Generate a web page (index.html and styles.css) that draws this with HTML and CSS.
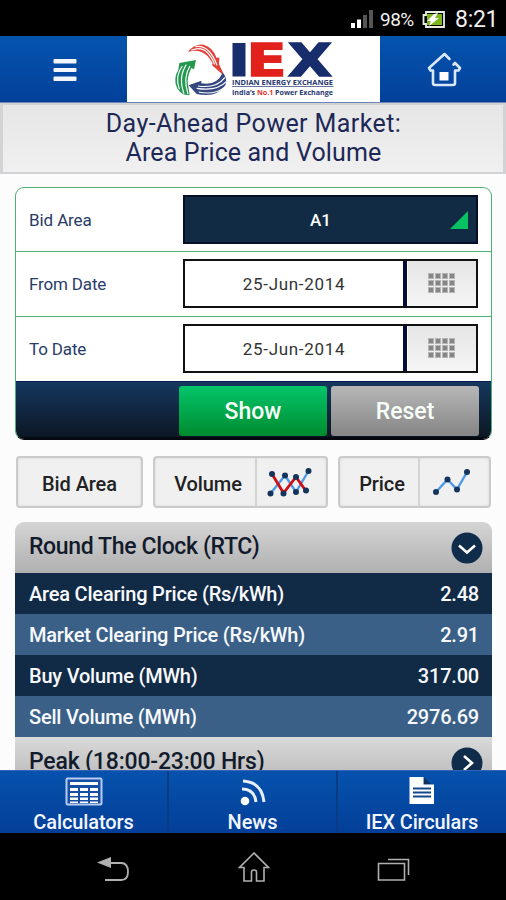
FILE: index.html
```html
<!DOCTYPE html>
<html lang="en">
<head>
<meta charset="utf-8">
<title>IEX - Area Price and Volume</title>
<link rel="stylesheet" href="styles.css">
</head>
<body>
<div class="phone">
  <div class="status">
    <svg class="signal" width="24" height="20" viewBox="0 0 24 20"><path fill="#fff" d="M1 14h4v5H1zM7 10.500h4V19H7z"/><path fill="#555" d="M13 6h4v13h-4zM19 1h4v18h-4z"/></svg>
    <span class="percent">98%</span>
    <svg class="battery" width="24" height="17" viewBox="0 0 24 17"><path fill="none" stroke="#e8eee0" stroke-width="1.800" d="M4 1h18v15H4v-3H1.500V4H4z"/><path fill="#7db51c" d="M5 3h15v11H5z"/><path fill="#fff" d="M16 2l-3 5h4L7 15l2-5H5l7-7z"/></svg>
    <span class="clock">8:21</span>
  </div>

  <header class="header">
    <div class="header-btn">
      <svg width="24" height="22" viewBox="0 0 24 22" fill="#f3f6ff"><rect x="0.500" width="23" height="4.500" rx="1"/><rect x="0.500" y="9" width="23" height="4" rx="1"/><rect x="0.500" y="17.500" width="23" height="4.500" rx="1"/></svg>
    </div>
    <div class="logo">
      <svg width="253" height="66" viewBox="127 36 253 66">
        <g transform="translate(170 36) scale(.3333)">
          <path fill="#e2413a" d="M54 47Q75 22 101 26Q128 33 140 66L148 64L147 84L164 121L126 88L128 82Q110 48 80 45Z"/>
          <path fill="none" stroke="#fff" stroke-width="3.500" d="M64 43Q110 22 134 86M76 32Q118 25 141 88M62 48Q100 38 122 78"/>
          <path fill="#23994f" d="M78 72L72 100L64 96Q50 125 54 145L59 177Q38 180 22 158Q8 130 25 101L28 81Z"/>
          <path fill="none" stroke="#fff" stroke-width="3.500" d="M60 90Q38 125 54 174M49 86Q24 123 42 173M37 90Q14 120 28 160"/>
          <path fill="#34477f" d="M56 148L94 134L94 142Q140 150 158 110Q174 125 166 148Q140 187 80 174Z"/>
          <path fill="none" stroke="#fff" stroke-width="3.500" d="M84 150Q140 158 165 124M80 157Q140 167 169 137M86 168Q130 178 163 155"/>
        </g>
        <g class="wordmark">
          <path fill="#172d6c" d="M232.500 43h13v33.500h-13z"/>
          <text x="246.500" y="76" textLength="40" lengthAdjust="spacingAndGlyphs" fill="#e2211c" stroke="#e2211c">E</text>
          <text x="288" y="76" textLength="44" lengthAdjust="spacingAndGlyphs" fill="#172d6c" stroke="#172d6c">X</text>
        </g>
        <text class="tag" x="232" y="84.500" textLength="101" lengthAdjust="spacingAndGlyphs">INDIAN ENERGY EXCHANGE</text>
        <path stroke="#68769e" d="M232 86.500h101.500"/>
        <text class="tag" x="232" y="94.500" textLength="101" lengthAdjust="spacingAndGlyphs">India’s <tspan fill="#e2312d">No.1</tspan> Power Exchange</text>
      </svg>
    </div>
    <div class="header-btn home">
      <svg width="36" height="36" viewBox="0 0 36 36" fill="none" stroke="#dbe7fb" stroke-width="2.600" stroke-linejoin="round" stroke-linecap="round"><path d="M23.500 8L18.500 3 3 17l1.500 2.500H7V32q0 2 2 2h18q2 0 2-2V19.500h3.500L34 17l-5-5-1.500 1.500"/><path fill="#fff" stroke="none" d="M13.500 21h9v8.500h-9z"/></svg>
    </div>
  </header>

  <h1 class="title"><span class="t1">Day-Ahead Power Market:</span><span class="t2">Area Price and Volume</span></h1>

  <main class="content">
    <section class="form">
      <div class="row">
        <label class="l1">Bid Area</label>
        <div class="select"><span>A1</span><i class="corner"></i></div>
      </div>
      <div class="row">
        <label class="l2">From Date</label>
        <div class="date"><span class="value">25-Jun-2014</span><span class="cal"><i></i><i></i><i></i><i></i><i></i><i></i><i></i><i></i><i></i><i></i><i></i><i></i></span></div>
      </div>
      <div class="row">
        <label class="l3">To Date</label>
        <div class="date"><span class="value">25-Jun-2014</span><span class="cal"><i></i><i></i><i></i><i></i><i></i><i></i><i></i><i></i><i></i><i></i><i></i><i></i></span></div>
      </div>
      <div class="actions">
        <div class="btn show">Show</div>
        <div class="btn reset">Reset</div>
      </div>
    </section>

    <div class="chips">
      <div class="chip c1"><span>Bid Area</span></div>
      <div class="chip c2"><span>Volume</span>
        <div class="chart"><svg width="46" height="32" viewBox="0 0 46 32"><path fill="none" stroke="#4c9ae6" stroke-width="2.400" d="M4.500 27.500L19 9.500 30 26 42.500 5"/><path fill="none" stroke="#d00d12" stroke-width="2.800" d="M6 8L17.500 27 30 11 40 25"/><g fill="#15345c"><circle cx="4.500" cy="27.500" r="3"/><circle cx="19" cy="9.500" r="3"/><circle cx="30" cy="26" r="3"/><circle cx="42.500" cy="5" r="3"/><circle cx="6" cy="8" r="3"/><circle cx="17.500" cy="27.500" r="3"/><circle cx="30" cy="11" r="3"/><circle cx="40" cy="24.500" r="3"/></g></svg></div>
      </div>
      <div class="chip c3"><span>Price</span>
        <div class="chart"><svg width="40" height="32" viewBox="0 0 40 32"><path fill="none" stroke="#4c9ae6" stroke-width="2.400" d="M4 26L15.500 13.500 25 23.500 35 6"/><g fill="#15345c"><circle cx="4" cy="26" r="3"/><circle cx="15.500" cy="13.500" r="3"/><circle cx="25" cy="23.500" r="3"/><circle cx="35" cy="6" r="3"/></g></svg></div>
      </div>
    </div>

    <section class="panel">
      <div class="panel-head first"><span class="h1t">Round The Clock (RTC)</span>
        <svg width="32" height="32" viewBox="0 0 32 32"><circle cx="16" cy="16" r="15.500" fill="#102c4b"/><path fill="none" stroke="#fff" stroke-width="2.600" d="M8 13.500l8 7 8-7"/></svg>
      </div>
      <div class="data dark"><span>Area Clearing Price (Rs/kWh)</span><span>2.48</span></div>
      <div class="data light"><span>Market Clearing Price (Rs/kWh)</span><span>2.91</span></div>
      <div class="data dark"><span>Buy Volume (MWh)</span><span>317.00</span></div>
      <div class="data light"><span>Sell Volume (MWh)</span><span>2976.69</span></div>
      <div class="panel-head second"><span class="h2t">Peak (18:00-23:00 Hrs)</span>
        <svg width="32" height="32" viewBox="0 0 32 32"><circle cx="16" cy="16" r="15.500" fill="#102c4b"/><path fill="none" stroke="#fff" stroke-width="2.600" d="M13 9l8 7-8 7"/></svg>
      </div>
    </section>
  </main>

  <nav class="tabs">
    <div class="tab">
      <svg width="38" height="30" viewBox="0 0 38 30"><rect x="1.500" y="1.500" width="35" height="26" rx="1" fill="#164da5" stroke="#b5cbf3" stroke-width="2"/><path fill="#fff" d="M5 5h28v3H5zM5 11h8v3H5zM15 11h8v3h-8zM25 11h8v3h-8zM5 16h8v3H5zM15 16h8v3h-8zM25 16h8v3h-8zM5 20.500h8v2.500H5zM15 20.500h8v2.500h-8zM25 20.500h8v2.500h-8zM5 24.500h8v1.500H5zM15 24.500h8v1.500h-8zM25 24.500h8v1.500h-8z"/></svg>
      <span class="n1">Calculators</span>
    </div>
    <div class="tab">
      <svg width="28" height="30" viewBox="0 0 28 30"><circle cx="6" cy="24" r="4.300" fill="#fff"/><path fill="none" stroke="#e7effc" stroke-width="3" d="M3 12Q15.500 12 17 25M4 4Q23 5 25 25"/></svg>
      <span class="n2">News</span>
    </div>
    <div class="tab">
      <svg width="26" height="30" viewBox="0 0 26 30"><path fill="#fff" d="M0.500 0h14v7.500h10.500v19.500H0.500z"/><path fill="#13305c" d="M15 0.500l7 6.500h-7z"/><path stroke="#14478f" stroke-width="2" d="M4 11.500h18M4 15.500h18M4 19.500h18"/></svg>
      <span class="n3">IEX Circulars</span>
    </div>
  </nav>

  <div class="system">
    <svg width="34" height="30" viewBox="0 0 34 30"><path fill="none" stroke="#b0b0b0" stroke-width="1.800" d="M12 10h12q7 0 7 9 0 8-7 8H8"/><path fill="#b0b0b0" d="M0 9.500L14 4v11z"/></svg>
    <svg width="34" height="34" viewBox="0 0 34 34" fill="none" stroke="#b0b0b0" stroke-width="1.600"><path d="M17 2L2.500 16.500H7V30h7.500V21q0-2 2.500-2t2.500 2v9H27V16.500h4.500z"/></svg>
    <svg width="34" height="30" viewBox="0 0 34 30" fill="none" stroke="#b0b0b0" stroke-width="1.600"><path d="M1.500 10.500h26V27h-26zM11 6.500h20.500V22"/></svg>
  </div>
</div>
</body>
</html>
```
FILE: styles.css
```css
* { box-sizing: border-box; }
body { margin: 0; font-family: Roboto, "Liberation Sans", sans-serif; background: #000; }
.phone { width: 506px; height: 900px; overflow: hidden; display: flex; flex-direction: column; background: #fdfcfc; }
svg { display: block; flex: none; }
span, label { white-space: nowrap; }

.status { height: 36px; flex: none; background: #000; display: flex; align-items: center; justify-content: flex-end; padding: 2px 8px 0 0; color: #f0f0f0; }
.signal { margin: 0 6px 0 0; }
.percent { font-size: 19px; letter-spacing: -0.5px; width: 36px; }
.battery { margin: 0 9px 0 6px; }
.clock { font-size: 23px; letter-spacing: -0.3px; width: 43px; }

.header { height: 67px; flex: none; display: grid; grid-template-columns: 127px 253px 126px; background: linear-gradient(#0454ae, #03409a); border-bottom: 1px solid #6b86b5; }
.header-btn { display: flex; align-items: center; justify-content: center; padding: 2px 0 0 2px; }
.home { padding-top: 0; padding-left: 2px; }
.logo { background: #fff; }
.wordmark { font: 900 44px "DejaVu Sans", sans-serif; stroke-width: 1.5px; }
.tag { font: bold 7.500px "Open Sans", sans-serif; fill: #27376f; }

.title { height: 71px; flex: none; margin: 0; display: flex; flex-direction: column; align-items: center; background: linear-gradient(#e6e6e6, #f0f0f0); border: 3px solid #d2d3d5; border-top-width: 2px; border-bottom-width: 2px; font-weight: 400; font-size: 25px; line-height: 29px; padding-top: 4px; color: #1d2857; }
.t1 { letter-spacing: 0.4px; padding-left: 1px; }
.t2 { letter-spacing: 0.15px; padding-left: 1px; }

.content { flex: 1; min-height: 0; overflow: hidden; padding: 13px 14px 0 15px; }
.form { width: 477px; height: 253px; border: 1px solid #4eb071; border-bottom-color: #05080f; border-radius: 9px; overflow: hidden; display: grid; grid-template-rows: 64px 65px 64px 58px; background: #fff; }
.row { display: flex; align-items: center; justify-content: space-between; padding: 0 13px; border-bottom: 1px solid #4eaf70; color: #293b68; font-size: 17px; }
.row:nth-child(3) { border-bottom: 0; }
.l1 { letter-spacing: -0.1px; }
.l2 { letter-spacing: -0.15px; }
.l3 { letter-spacing: -0.15px; }
.select { position: relative; width: 295px; height: 49px; border: 2px solid #050f26; background: #122b45; display: flex; align-items: center; justify-content: center; padding-right: 20px; color: #fff; font-size: 17px; font-weight: 500; }
.corner { position: absolute; right: 8px; top: 14px; width: 18px; height: 18px; background: #08c162; clip-path: polygon(100% 0, 100% 100%, 0 100%); }
.date { width: 295px; height: 49px; margin-top: -1px; border: 2px solid #111; display: grid; grid-template-columns: 218px 4px 69px; background: linear-gradient(90deg, #fff 218px, #050b37 218px, #050b37 222px, #fff 222px); }
.value { display: flex; align-items: center; justify-content: center; color: #333; letter-spacing: 0.7px; }
.cal { grid-column: 3; margin-left: 1px; background: linear-gradient(#e5e5e5, #f5f5f5); display: grid; grid-template-columns: repeat(4, 6px); grid-auto-rows: 6px; gap: 1px; justify-content: center; align-content: center; padding: 0 2px 2px 0; }
.cal i { background: #858585; border: 0.5px solid #b5b5b5; }
.actions { background: linear-gradient(#16375f, #0c1724); border-top: 1px solid #071c4e; border-bottom: 2px solid #05080f; display: flex; gap: 4px; justify-content: flex-end; padding: 4px 12px 0 0; }
.btn { height: 50px; width: 148px; border-radius: 3px; display: flex; align-items: center; justify-content: center; font-size: 23px; font-weight: 500; color: #f8fff8; letter-spacing: 0; }
.show { background: linear-gradient(#04c569, #008b30); }
.reset { background: linear-gradient(#b7b7b7, #858585); }

.chips { display: flex; gap: 10px; margin: 16px 0 0 1px; }
.chip { height: 52px; border: 2px solid #cbcbcd; border-radius: 4px; background: #f0f0f0; display: flex; align-items: center; color: #222; font-size: 20px; padding-top: 3px; box-shadow: inset 0 0 3px #d8d8d8; letter-spacing: -0.1px; }
.chip > span { flex: 1; text-align: center; font-weight: 500; }
.c1 { width: 127px; }
.c2 { width: 175px; }
.c3 { width: 153px; }
.c2 > span, .c3 > span { padding-left: 6px; }
.chart { align-self: stretch; margin-top: -3px; border-left: 2px solid #d3d3d3; display: flex; align-items: center; justify-content: center; width: 71px; padding-right: 6px; }

.panel { width: 477px; margin-top: 14px; }
.panel-head { display: flex; justify-content: space-between; align-items: center; padding: 0 9px 0 14px; height: 51px; background: linear-gradient(#d5d5d5, #b0b0b0); color: #121b2c; font-size: 23px; font-weight: 500; }
.first { border-radius: 9px 9px 0 0; }
.first span { margin-top: -3px; }
.h1t { letter-spacing: -0.36px; }
.second { background: linear-gradient(#d9d9d9, #b5b5b5); }
.second span { margin-top: -3px; }
.h2t { letter-spacing: -0.18px; }
.data { display: flex; justify-content: space-between; align-items: center; height: 41px; padding: 1px 13px 0 14px; color: #f7f9fc; font-size: 20px; font-weight: 500; letter-spacing: -0.2px; }
.dark { background: #112a46; }
.light { background: #3b6088; }

.tabs { height: 63px; flex: none; display: grid; grid-template-columns: 169px 169px 168px; background: linear-gradient(#0652ad, #033f98); border-top: 1px solid #3560b8; }
.tab { display: flex; flex-direction: column; align-items: center; padding-top: 6px; color: #f2f6ff; font-size: 20px; font-weight: 500; line-height: 28px; border-right: 2px solid #0a3c86; }
.tab:last-child { border: 0; }
.tab span { margin-top: 1px; }
.n1 { letter-spacing: -0.1px; }
.n3 { letter-spacing: -0.15px; }
.system { height: 67px; flex: none; background: #000; display: grid; grid-template-columns: repeat(3, 34px); justify-content: center; column-gap: 106px; align-items: center; padding: 2px 0 0 1px; }
```
